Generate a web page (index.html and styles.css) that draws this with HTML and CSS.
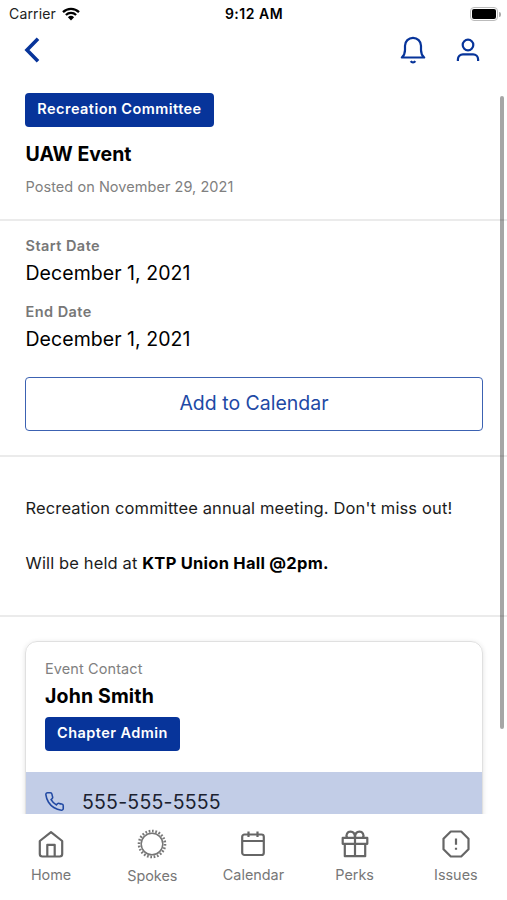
FILE: index.html
```html
<!DOCTYPE html>
<html lang="en">
<head>
    <meta charset="utf-8" />
    <meta name="viewport" content="width=device-width, initial-scale=1.0" />
    <title>UAW Event</title>
    <link rel="stylesheet" href="styles.css">
</head>
<body>
    <div class="status-bar">
        <div class="carrier">
            <span>Carrier</span>
            <svg class="wifi" viewBox="0 0 18 14" width="18" height="14">
                <path d="M1 5.1a11.5 11.5 0 0 1 16 0M3.9 8a7.4 7.4 0 0 1 10.2 0" fill="none" stroke="#000" stroke-width="2.3" />
                <path d="M9 13.6L5.9 10.3a4.5 4.5 0 0 1 6.2 0z" />
            </svg>
        </div>
        <span class="time">9:12 AM</span>
        <div class="power">
            <div class="battery"></div>
            <div class="battery-tip"></div>
        </div>
    </div>

    <header>
        <svg class="back" viewBox="0 0 16 26" width="16" height="26">
            <path d="M14 1.8L3 13l11 11.2" />
        </svg>
        <div class="header-icons">
            <svg class="icon bell" viewBox="0 0 26 28" width="26" height="28">
                <path d="M5 14V9.800a8 8 0 0 1 16 0V14c0 3.500 1 5.600 3.200 7.500H1.800C4 19.600 5 17.500 5 14z" />
                <path d="M10.700 25.200a2.700 2.700 0 0 0 4.600 0" />
            </svg>
            <svg class="icon user" viewBox="0 0 24 26" width="24" height="26">
                <circle cx="12" cy="8" r="5.300" />
                <path d="M1.900 24v-1.700a5 5 0 0 1 5-5h10.200a5 5 0 0 1 5 5V24" />
            </svg>
        </div>
    </header>

    <main>
        <section class="intro">
            <span class="tag">Recreation Committee</span>
            <h1>UAW Event</h1>
            <p class="posted">Posted on November 29, 2021</p>
        </section>

        <section class="dates">
            <h2>Start Date</h2>
            <p class="date">December 1, 2021</p>
            <h2>End Date</h2>
            <p class="date">December 1, 2021</p>
            <button class="add-calendar">Add to Calendar</button>
        </section>

        <section class="description">
            <p class="line-one">Recreation committee annual meeting. Don't miss out!</p>
            <p class="line-two">Will be held at <b>KTP Union Hall @2pm.</b></p>
        </section>

        <section class="contact">
            <div class="card">
                <div class="card-top">
                    <p class="card-label">Event Contact</p>
                    <h3>John Smith</h3>
                    <span class="tag tag-admin">Chapter Admin</span>
                </div>
                <div class="phone">
                    <svg viewBox="0 0 24 24" width="21" height="21">
                        <path d="M22 16.920v3a2 2 0 0 1-2.180 2 19.790 19.790 0 0 1-8.630-3.070 19.500 19.500 0 0 1-6-6 19.790 19.790 0 0 1-3.070-8.670A2 2 0 0 1 4.110 2h3a2 2 0 0 1 2 1.720 12.840 12.840 0 0 0 .7 2.810 2 2 0 0 1-.45 2.110L8.090 9.910a16 16 0 0 0 6 6l1.270-1.270a2 2 0 0 1 2.110-.45 12.840 12.840 0 0 0 2.810.7A2 2 0 0 1 22 16.920z" />
                    </svg>
                    <span>555-555-5555</span>
                </div>
            </div>
        </section>
        <div class="scrollbar"></div>
    </main>

    <nav>
        <a class="tab">
            <svg viewBox="0 0 30 30" width="30" height="30">
                <path d="M3.800 12L15 3.200 26.200 12v13a2.500 2.500 0 0 1-2.500 2.500H6.300A2.500 2.500 0 0 1 3.800 25z" />
                <path d="M11.300 27.500V15.800h7.400v11.700" />
            </svg>
            <span>Home</span>
        </a>
        <a class="tab tab-spokes">
            <svg viewBox="0 0 30 30" width="30" height="30">
                <circle cx="15" cy="15" r="10.800" stroke-width="1.500" />
                <circle cx="15" cy="15" r="13" stroke-width="2.600" pathLength="72" stroke-dasharray="1.500 1.500" />
            </svg>
            <span>Spokes</span>
        </a>
        <a class="tab">
            <svg viewBox="0 0 30 30" width="30" height="30">
                <rect x="4.200" y="5.500" width="21.600" height="20.500" rx="2.300" />
                <path d="M10.500 2.500v5.500M19.500 2.500v5.500M4.200 12h21.600" />
            </svg>
            <span>Calendar</span>
        </a>
        <a class="tab">
            <svg viewBox="0 0 30 30" width="30" height="30">
                <path d="M4.800 15v12.200h20.400V15M2.700 8.900h24.600v5.900H2.700zM15 8.900v18.300" />
                <path d="M7.200 8.900C5.300 5.600 7.500 2.700 10.500 2.700c3 0 4.500 2.300 4.500 6.200 0-3.900 1.500-6.200 4.500-6.200 3 0 5.200 2.900 3.300 6.200" />
            </svg>
            <span>Perks</span>
        </a>
        <a class="tab">
            <svg viewBox="0 0 30 30" width="30" height="30">
                <path d="M9.800 2.500h10.400l7.300 7.300v10.400l-7.300 7.300H9.800l-7.300-7.300V9.800z" />
                <path d="M15 9.500v6.200M15 18.800v2" />
            </svg>
            <span>Issues</span>
        </a>
    </nav>
</body>
</html>
```
FILE: styles.css
```css
* {
    box-sizing: border-box;
}

body {
    font-family: Inter, "Liberation Sans", sans-serif;
    margin: 0;
    height: 900px;
    display: flex;
    flex-direction: column;
    overflow: hidden;
    background-color: #fff;
    color: #000;
}

h1, h2, h3, p {
    margin: 0;
}

svg {
    display: block;
    overflow: visible;
}

/* status bar */
.status-bar {
    display: grid;
    grid-template-columns: 1fr auto 1fr;
    align-items: center;
    height: 28px;
    padding: 0 6px 0 9px;
    font-size: 14px;
    line-height: 28px;
}

.carrier {
    display: flex;
    align-items: center;
    gap: 6px;
    color: #222;
    letter-spacing: 0.15px;
}

.time {
    margin-right: 2px;
    font-weight: 600;
    letter-spacing: 0.5px;
}

.power {
    display: flex;
    justify-content: flex-end;
    align-items: center;
    gap: 1px;
}

.battery {
    width: 28px;
    height: 14px;
    border: 1.5px solid #bbb;
    border-radius: 4px;
    padding: 1px;
    background-color: #000;
    background-clip: content-box;
}

.battery-tip {
    width: 2px;
    height: 5px;
    border-radius: 0 2px 2px 0;
    background-color: #aaa;
}

/* header */
header {
    display: flex;
    justify-content: space-between;
    align-items: center;
    height: 44px;
    padding: 0 27.5px 0 24px;
}

.back {
    fill: none;
    stroke: #07349a;
    stroke-width: 3.6;
}

.header-icons {
    display: flex;
    align-items: center;
    gap: 30px;
}

.icon {
    fill: none;
    stroke: #07349a;
    stroke-width: 2.2;
    stroke-linejoin: round;
}

/* page content */
main {
    position: relative;
    height: 742px;
    overflow: hidden;
}

section {
    padding: 0 25px;
    border-bottom: 2px solid #ebebeb;
}

.tag {
    display: block;
    width: 189px;
    height: 34px;
    border-radius: 4px;
    background-color: #07349a;
    color: #fff;
    font-size: 14.5px;
    font-weight: 600;
    line-height: 31px;
    text-align: center;
    letter-spacing: 0.45px;
}

.intro {
    height: 149px;
    padding-top: 21px;
}

h1, h3 {
    font-size: 19.5px;
    font-weight: 700;
    line-height: 26px;
}

h1 {
    margin-top: 14px;
    padding-left: 0.5px;
}

.posted {
    margin-top: 10px;
    padding-left: 0.5px;
    font-size: 14.5px;
    line-height: 20px;
    letter-spacing: 0.05px;
    color: #808080;
}

.dates {
    height: 236px;
    padding-top: 15px;
}

h2 {
    padding-left: 0.5px;
    font-size: 14.5px;
    font-weight: 600;
    line-height: 20px;
    letter-spacing: 0.45px;
    color: #777;
}

.date {
    margin: 4px 0 16px;
    padding-left: 0.5px;
    font-size: 19.5px;
    line-height: 26px;
    letter-spacing: 0.05px;
}

.add-calendar {
    display: block;
    width: 458px;
    height: 54px;
    margin-top: 25px;
    padding: 0 0 2px;
    border: 1.5px solid #3c62b2;
    border-radius: 4px;
    background-color: #fff;
    color: #1e49a5;
    font-family: inherit;
    font-size: 19.5px;
}

.description {
    height: 160px;
    padding-top: 39px;
    padding-left: 25.5px;
    font-size: 16.5px;
    line-height: 24px;
    letter-spacing: 0.13px;
    color: #1c1c1c;
}

.line-two {
    margin-top: 31px;
}

.description b {
    color: #000;
    letter-spacing: 0.25px;
}

.contact {
    padding-top: 24px;
    border-bottom: none;
}

.card {
    width: 458px;
    border: 1px solid #e0e0e0;
    border-radius: 12px;
    box-shadow: 0 1px 5px rgba(0, 0, 0, 0.12);
    overflow: hidden;
}

.card-top {
    height: 130px;
    padding: 17px 19px 0;
}

.card-label {
    font-size: 14.5px;
    line-height: 20px;
    letter-spacing: 0.1px;
    color: #808080;
}

h3 {
    margin: 4px 0 8px;
    letter-spacing: 0.15px;
}

.tag-admin {
    width: 135px;
}

.phone {
    display: flex;
    align-items: center;
    gap: 17px;
    height: 60px;
    padding: 0 18px;
    background-color: #c2cde7;
    color: #1b2230;
    font-size: 19.5px;
    letter-spacing: 0.2px;
}

.phone svg {
    margin-bottom: 2px;
    fill: none;
    stroke: #2149a3;
    stroke-width: 1.8;
}

.scrollbar {
    position: absolute;
    top: 24px;
    right: 3px;
    width: 4px;
    height: 633px;
    border-radius: 2px;
    background-color: rgba(0, 0, 0, 0.35);
}

/* bottom tabs */
nav {
    display: grid;
    grid-template-columns: repeat(5, 101.2px);
    height: 86px;
    padding: 15px 0 0 0.5px;
}

.tab {
    display: flex;
    flex-direction: column;
    align-items: center;
    gap: 6px;
    color: #777;
    font-size: 14.4px;
    line-height: 20px;
}

.tab svg {
    fill: none;
    stroke: #666;
    stroke-width: 2.2;
    stroke-linejoin: round;
}

.tab-spokes {
    gap: 7px;
}

.tab-spokes svg {
    stroke: #777;
}
```
